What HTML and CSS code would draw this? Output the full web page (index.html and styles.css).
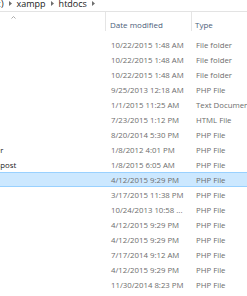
FILE: index.html
```html
<!DOCTYPE html>
<html>
<head>
<meta charset="utf-8">
<link rel="stylesheet" href="styles.css">
</head>
<body>
<div class="explorer">
  <div class="crumbs">
    <span class="crumb">Local Disk (C:)</span>
    <svg class="sep" width="3" height="5" viewBox="0 0 3 5"><path d="M0 0 L3 2.5 L0 5 Z"/></svg>
    <span class="crumb">xampp</span>
    <svg class="sep" width="3" height="5" viewBox="0 0 3 5"><path d="M0 0 L3 2.5 L0 5 Z"/></svg>
    <span class="crumb">htdocs</span>
    <svg class="sep" width="3" height="5" viewBox="0 0 3 5"><path d="M0 0 L3 2.5 L0 5 Z"/></svg>
  </div>
  <div class="list">
    <div class="row head">
      <div class="cell name"><svg class="sort" width="5" height="3" viewBox="0 0 5 3"><path d="M0.5 2.5 L2.5 0.5 L4.5 2.5" fill="none" stroke="#a0a0a0" stroke-width="0.9"/></svg><span>Name</span></div>
      <div class="cell date">Date modified</div>
      <div class="cell type">Type</div>
    </div>
    <div class="row"><div class="cell name">wp-admin</div><div class="cell date">10/22/2015 1:48 AM</div><div class="cell type">File folder</div></div>
    <div class="row"><div class="cell name">wp-content</div><div class="cell date">10/22/2015 1:48 AM</div><div class="cell type">File folder</div></div>
    <div class="row"><div class="cell name">wp-includes</div><div class="cell date">10/22/2015 1:48 AM</div><div class="cell type">File folder</div></div>
    <div class="row"><div class="cell name">index</div><div class="cell date">9/25/2013 12:18 AM</div><div class="cell type">PHP File</div></div>
    <div class="row"><div class="cell name">license</div><div class="cell date">1/1/2015 11:25 AM</div><div class="cell type">Text Document</div></div>
    <div class="row"><div class="cell name">readme</div><div class="cell date">7/23/2015 1:12 PM</div><div class="cell type">HTML File</div></div>
    <div class="row"><div class="cell name">wp-activate</div><div class="cell date">8/20/2014 5:30 PM</div><div class="cell type">PHP File</div></div>
    <div class="row"><div class="cell name">wp-blog-header</div><div class="cell date">1/8/2012 4:01 PM</div><div class="cell type">PHP File</div></div>
    <div class="row"><div class="cell name">wp-comments-post</div><div class="cell date">1/8/2015 6:05 AM</div><div class="cell type">PHP File</div></div>
    <div class="row selected"><div class="cell name">wp-config</div><div class="cell date">4/12/2015 9:29 PM</div><div class="cell type">PHP File</div></div>
    <div class="row"><div class="cell name">wp-cron</div><div class="cell date">3/17/2015 11:38 PM</div><div class="cell type">PHP File</div></div>
    <div class="row"><div class="cell name">wp-links-opml</div><div class="cell date">10/24/2013 10:58 ...</div><div class="cell type">PHP File</div></div>
    <div class="row"><div class="cell name">wp-load</div><div class="cell date">4/12/2015 9:29 PM</div><div class="cell type">PHP File</div></div>
    <div class="row"><div class="cell name">wp-login</div><div class="cell date">4/12/2015 9:29 PM</div><div class="cell type">PHP File</div></div>
    <div class="row"><div class="cell name">wp-mail</div><div class="cell date">7/17/2014 9:12 AM</div><div class="cell type">PHP File</div></div>
    <div class="row"><div class="cell name">wp-settings</div><div class="cell date">4/12/2015 9:29 PM</div><div class="cell type">PHP File</div></div>
    <div class="row"><div class="cell name">wp-signup</div><div class="cell date">11/30/2014 8:23 PM</div><div class="cell type">PHP File</div></div>
  </div>
</div>
</body>
</html>
```
FILE: styles.css
```css
html, body {
  margin: 0;
  padding: 0;
  background: #ffffff;
  overflow: hidden;
}
body {
  width: 247px;
  height: 296px;
  font-family: "Open Sans", "Noto Sans", sans-serif;
}
.explorer {
  width: 247px;
  height: 296px;
  overflow: hidden;
}
.crumbs {
  display: flex;
  align-items: center;
  gap: 5px;
  height: 11px;
  padding-bottom: 2px;
  margin-top: -2px;
  margin-left: -54px;
  border-bottom: 1px solid #e3e3e3;
  font-size: 9px;
  line-height: 11px;
  color: #1a1a1a;
  white-space: nowrap;
}
.sep {
  fill: #6e6e6e;
  flex: none;
}
.list {
  margin-left: -79px;
  width: 340px;
}
.row {
  display: grid;
  grid-template-columns: 185px 86px 69px;
  height: 15px;
  align-items: center;
  font-size: 7.8px;
  color: #6d6d6d;
  white-space: nowrap;
  box-sizing: border-box;
}
.row.head {
  height: 25px;
  align-items: stretch;
  font-size: 8px;
  color: #4c607a;
}
.head .cell {
  display: flex;
  align-items: center;
  border-right: 1px solid #e5e5e5;
  margin: 0 0 6px;
  padding-top: 5px;
}
.head .name {
  position: relative;
  justify-content: flex-start;
}
.head .name span {
  visibility: hidden;
}
.sort {
  position: absolute;
  left: 90px;
  top: 4px;
}
.cell {
  overflow: hidden;
  padding-left: 5px;
}
.name {
  color: #1a1a1a;
  padding-left: 25px;
}
.type {
  padding-left: 4px;
}
.head .date {
  padding-left: 4px;
}
.head .type {
  padding-left: 3px;
  border-right: none;
}
.row.selected {
  background: #cce8ff;
  border-top: 1px solid #99d1ff;
  border-bottom: 1px solid #99d1ff;
}
```
